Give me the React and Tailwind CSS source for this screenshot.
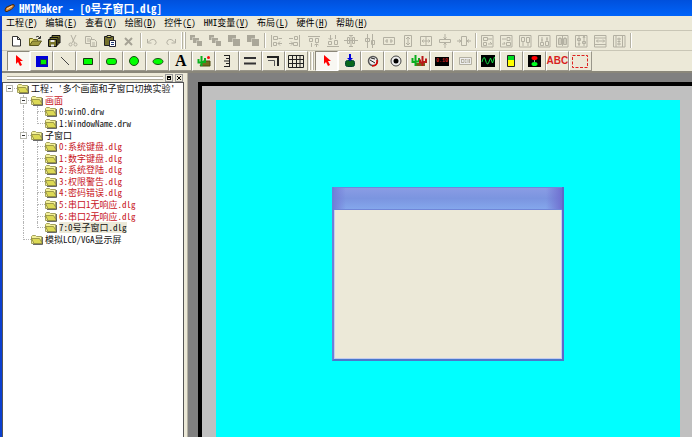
import { useState } from 'react'
import clsx from 'clsx'

const menus = [
  { text: '工程', hotkey: 'P' },
  { text: '编辑', hotkey: 'E' },
  { text: '查看', hotkey: 'V' },
  { text: '绘图', hotkey: 'D' },
  { text: '控件', hotkey: 'C' },
  { text: 'HMI变量', hotkey: 'V' },
  { text: '布局', hotkey: 'L' },
  { text: '硬件', hotkey: 'H' },
  { text: '帮助', hotkey: 'H' },
]

const tree = [
  { level: 0, text: "工程: '多个画面和子窗口切换实验'", open: true },
  { level: 1, text: '画面', open: true, red: true },
  { level: 2, text: '0:win0.drw' },
  { level: 2, text: '1:WindowName.drw', last: true },
  { level: 1, text: '子窗口', open: true },
  { level: 2, text: '0:系统键盘.dlg', red: true },
  { level: 2, text: '1:数字键盘.dlg', red: true },
  { level: 2, text: '2:系统登陆.dlg', red: true },
  { level: 2, text: '3:权限警告.dlg', red: true },
  { level: 2, text: '4:密码错误.dlg', red: true },
  { level: 2, text: '5:串口1无响应.dlg', red: true },
  { level: 2, text: '6:串口2无响应.dlg', red: true },
  { level: 2, text: '7:0号子窗口.dlg', last: true },
  { level: 1, text: '模拟LCD/VGA显示屏', last: true },
]

const Svg = ({ children, size = 14 }) => (
  <svg width={size} height={size} viewBox={`0 0 ${size} ${size}`} fill="none" stroke="#b3b0a2" className="shrink-0">
    {children}
  </svg>
)

/* ---- file and edit icons ---- */
const New = () => <Svg><path d="M3.5 2.5h5l3 3v6.5h-8zM8.5 2.5v3h3" fill="#fff" stroke="#333" /></Svg>
const Open = () => (
  <Svg>
    <path d="M1.5 11V4.5h3l1 1h4v2" fill="#e8e070" stroke="#6b661c" />
    <path d="M1.5 11.5l3-4.500h9l-3 4.500z" fill="#a09a3e" stroke="#5a5618" />
    <path d="M8 3q2-2 4 1M12.500 2v2.500h-2.500" stroke="#333" />
  </Svg>
)
const SaveAll = () => (
  <Svg>
    <path d="M5 1.500h8v7.500h-8z" fill="#77732a" stroke="#111" />
    <path d="M3 3.500h8v7.500H3z" fill="#77732a" stroke="#111" />
    <path d="M1.500 5.500h8v7h-8z" fill="#77732a" stroke="#111" />
    <path d="M3.500 6h4v2h-4zM4 10.500h3v2H4z" fill="#eee" stroke="none" />
  </Svg>
)
const Cut = () => <Svg><path d="M5 1l3.500 8M10 1L6 9" /><circle cx="4.500" cy="10.500" r="1.500" /><circle cx="9.500" cy="10.500" r="1.500" /></Svg>
const Copy = () => <Svg><path d="M1.500 2.500h5l1 1v6h-6zM3 5h3M3 7h3" /><path d="M6.500 5.500h4l2 2v5h-6zM8 9h3M8 11h3" fill="#ece9d8" /></Svg>
const Paste = () => (
  <Svg>
    <path d="M1.500 2.500h9v9h-9z" fill="#75712d" stroke="#222" />
    <path d="M4 1.500h4v2H4z" fill="#dcd877" stroke="#222" />
    <path d="M6.500 6.500h6v6h-6z" fill="#fff" stroke="#223" />
    <path d="M8 8.500h3M8 10.500h3" stroke="#223a7a" />
  </Svg>
)
const Delete = () => <Svg><path d="M3 4l7 7M10 4l-7 7" stroke="#a5a295" strokeWidth="2" /></Svg>
const Undo = () => <Svg><path d="M2.500 5v4h4M3 8.500q4-5 7.500-2 2 2.500-1 4.500" /></Svg>
const Redo = () => <Svg><path d="M11.500 5v4h-4M11 8.500q-4-5-7.500-2-2 2.500 1 4.500" /></Svg>

/* ---- stacking order icons ---- */
const Layers = ({ big }) => (
  <Svg>
    <path d={big ? 'M1 1h8v7H1zM6 5h7v7H6z' : 'M1 1h5v5H1zM4 4h6v5H4zM8 7h5v5H8z'} fill="#aaa799" stroke="none" />
    <path d={big ? 'M5.500 8V4.500H9' : 'M3.500 6V3.500H6M7.500 9V6.500H10'} stroke="#c9c6b8" />
  </Svg>
)
const Front = () => <Layers />
const Back = () => <Layers />
const Forward = () => <Layers big />
const Backward = () => <Layers big />

/* ---- alignment icons, all greyed out ---- */
const AlignLeft = () => <Svg><path d="M2.500 1v12M4.500 2.500h4v3h-4zM4.500 8.500h3v3h-3zM13 4.500H9.500M13 9.500H9l2-2M9 9.500l2 2" /></Svg>
const AlignRight = () => <Svg><path d="M11.500 1v12M6.500 2.500h3v3h-3zM5.500 8.500h4v3h-4zM1 4.500h4M1 9.500h4l-2-2M5 9.500l-2 2" /></Svg>
const AlignTop = () => <Svg><path d="M1 2.500h12M2.500 4.500h3v3h-3zM8.500 4.500h3v4h-3zM4.500 13V9M9.500 13v-3l-2 1M9.500 10l2 1" /></Svg>
const AlignBottom = () => <Svg><path d="M1 12.500h12M2.500 7.500h3v3h-3zM8.500 6.500h3v4h-3zM4.500 1v5l-2-2M4.500 6l2-2M9.500 1v4" /></Svg>
const CenterV = () => <Svg><path d="M0 6.500h14M3.500 3.500h2v6h-2zM8.500 3.500h2v6h-2zM7 1v12M5 12.500h4M5 1.500h4" /></Svg>
const CenterH = () => <Svg><path d="M4.500 0v14M9.500 0v14M2.500 4.500h4v3h-4zM8.500 6.500h3v4h-3z" /></Svg>
const SameW = () => <Svg><path d="M1.500 3.500h11v7h-11zM3 7h3M8 7h3M5 5v4M9 5v4" /></Svg>
const SameH = () => <Svg><path d="M3.500 1.500h7v11h-7zM7 3v8M5 5l2-2 2 2M5 9l2 2 2-2" /></Svg>
const SameBoth = () => <Svg><path d="M1.500 2.500h11v9h-11zM3 7h8M7 3v8M4.500 5.500L3 7l1.500 1.500M9.500 5.500L11 7l-1.500 1.500" /></Svg>
const SpaceV = () => <Svg><path d="M1.500 5.500h11v3h-11zM7 0v5M7 14V9M5.500 3.500L7 5l1.500-1.500M5.500 10.500L7 9l1.500 1.500" /></Svg>
const SpaceH = () => <Svg><path d="M4.500 2.500h5v9h-5zM0 7h4M14 7h-4M2 5.500L4 7 2 8.500M12 5.500L10 7l2 1.500" /></Svg>

const Framed = ({ d }) => <Svg><path d="M1.500 1.500h11.500v11.500H1.500z" /><path d={d} /></Svg>
const PageLeft = () => <Framed d="M3.500 3.500h4v3h-4zM3.500 8.500h3v3h-3zM8 5h4M8 10h4l-2-2" />
const PageRight = () => <Framed d="M8 3.500h3v3H8zM7.500 8.500h4v3h-4zM3 5h4M3 10h3l-1-2" />
const PageTop = () => <Framed d="M3.500 3.500h3v4h-3zM8.500 3.500h3v5h-3zM5 8v4M10 9v3" />
const PageBottom = () => <Framed d="M3.500 8.500h3v3h-3zM8.500 7.500h3v4h-3zM5 3v5M10 3v4M4 6h2M9 5h2" />
const PageCenterH = () => <Framed d="M3.500 4.500h3v6h-3zM8.500 4.500h3v6h-3zM7.500 2v10M5 3v8M10 3v8" />
const PageCenterV = () => <Framed d="M5 2v10M10 2v10M3.500 4.500h3v2h-3zM8.500 7.500h3v2h-3zM4 9l1 2 1-2M9 4l1-2 1 2" />
const PageW = () => <Framed d="M2 4h11M2 10.500h11M3.500 7h8M5 5.500L3.500 7 5 8.500M10 5.500L11.500 7 10 8.500" />
const PageH = () => <Framed d="M4 2v11M10.500 2v11M7 3.500v8M5 5h4M5 10h4M5.500 7.500h3" />

/* ---- drawing tool icons ---- */
const Pointer = () => <Svg size={16}><path d="M5 2v9l2-2 2 4 2-1-2-4h3z" fill="#f00" stroke="none" /></Svg>
const Window = () => <Svg size={16}><path d="M2 3h12v11H2z" fill="#0000d8" stroke="none" /><path d="M6.500 6.500h6v5h-6z" fill="#0e0" stroke="#135" /></Svg>
const Line = () => <Svg size={16}><path d="M4 4l8 8" stroke="#444" /></Svg>
const Rect = () => <Svg size={16}><path d="M3.500 5.500h9v6h-9z" fill="#0f0" stroke="#163a10" /></Svg>
const RoundRect = () => <Svg size={16}><rect x="3.500" y="5.500" width="10" height="6" rx="2.500" fill="#0f0" stroke="#1a4f14" /></Svg>
const Circle = () => <Svg size={16}><circle cx="8" cy="8" r="4.500" fill="#0f0" stroke="#1a4f14" /></Svg>
const Ellipse = () => <Svg size={16}><ellipse cx="8" cy="8.500" rx="5" ry="3" fill="#0f0" stroke="#1a4f14" /></Svg>
const Letter = () => <span className="font-['Liberation_Serif',serif] text-base leading-none font-bold">A</span>
const Picture = () => (
  <Svg size={16}>
    <path d="M7 8h7v5H4z" fill="#736b1c" stroke="#4c4a10" />
    <path d="M2.500 6v3.500H5M5.500 3v10M5 9h4V5" stroke="#0ab01e" strokeWidth="2" />
    <circle cx="12.500" cy="4.500" r="1.500" fill="#e11" stroke="none" />
  </Svg>
)
const Ruler = () => <Svg size={16}><path d="M10.500 2v12M5 2.500h6M7 5.500h4M5 8h6M7 10.500h4M5 13.500h6" stroke="#222" /></Svg>
const Parallel = () => <Svg size={16}><path d="M2 5h12M2 10.500h12" stroke="#333" strokeWidth="2" /></Svg>
const Pipe = () => <Svg size={16}><path d="M2 4h11v9" stroke="#222" strokeWidth="2" /><path d="M3 7.500h6.500V13" stroke="#555" /></Svg>
const Table = () => <Svg size={16}><path d="M.500 2.500h15v12H.500zM4.500 2v12M8.500 2v12M12 2v12M0 6.500h16M0 10.500h16" stroke="#222" /></Svg>
const Press = () => <Svg size={16}><rect x="3.500" y="7.500" width="9" height="6" rx="2" fill="#08681a" stroke="#043" /><path d="M8 1v4" stroke="#00d" strokeWidth="2" /><path d="M5 5h6L8 8z" fill="#00d" stroke="none" /></Svg>
const Gauge = () => <Svg size={16}><circle cx="8" cy="8" r="4.500" fill="#eee" stroke="#555" strokeWidth="1.500" /><path d="M5 7l5 3M6 5l4 1" stroke="#222" /><path d="M12 7q1 6-5 6" stroke="#d00" strokeWidth="1.500" /></Svg>
const Radio = () => <Svg size={16}><circle cx="8" cy="8" r="5" fill="#eee" stroke="#444" /><circle cx="8" cy="8" r="2.500" fill="#000" stroke="none" /></Svg>
const Plants = () => (
  <Svg size={16}>
    <path d="M4 10h10v3H4z" fill="#70621a" stroke="none" />
    <path d="M1.500 5v4h3M4.500 2v11M4 8.500h4V5" stroke="#0ab01e" strokeWidth="2" />
    <path d="M9 6.500v3h3M11.500 3v10M12 9h3V5.500" stroke="#b91818" strokeWidth="2" />
  </Svg>
)
const Led = () => (
  <span className="flex h-[9px] w-[14px] items-center justify-center bg-black font-['Liberation_Mono',monospace] text-[5px] leading-none font-bold text-[#d02020]">0.10</span>
)
const Edit = () => <Svg size={16}><path d="M2.500 4.500h12v7h-12z" fill="#eee" /><path d="M4.500 6v4M5 6.500h2v3H5M8 6.500h1.500M8 8h1.500M8 9.500h1.500M11 6v4M12.500 6v4" /></Svg>
const Wave = () => <Svg size={16}><path d="M1 2h14v12H1z" fill="#000" stroke="none" /><path d="M2 9q2-8 3.500-2t3 3l2-5 2 5 2-6" stroke="#1d4" /></Svg>
const Bar = () => <Svg size={16}><path d="M4.500 2.500h7v11h-7z" fill="#ff0" stroke="#222" /><path d="M5 3h6v4H5z" fill="#0d2" stroke="none" /></Svg>
const Lamp = () => <Svg size={16}><path d="M2 2h13v12H2z" fill="#000" stroke="none" /><ellipse cx="8.500" cy="5" rx="3" ry="2" fill="#f00" stroke="none" /><path d="M8.500 7v2" stroke="#999" /><ellipse cx="8.500" cy="11" rx="3" ry="2" fill="#0f2" stroke="none" /></Svg>
const Abc = () => <span className="font-['Liberation_Sans',sans-serif] text-[10px] leading-none font-bold text-[#d81f1f]">ABC</span>
const Frame = () => <Svg size={16}><path d="M.5 2.500h15v12H.5z" stroke="#d22" strokeDasharray="3 1.500" /></Svg>

const fileTools = { New, Open, SaveAll, Cut, Copy, Paste, Delete }
const historyTools = { Undo, Redo }
const orderTools = { Front, Back, Forward, Backward }
const alignTools = { AlignLeft, AlignRight, AlignTop, AlignBottom, CenterV, CenterH, SameW, SameH, SameBoth, SpaceV, SpaceH }
const pageTools = { PageLeft, PageRight, PageTop, PageBottom, PageCenterH, PageCenterV, PageW, PageH }
const drawTools = { Pointer, Window, Line, Rect, RoundRect, Circle, Ellipse, Letter, Picture, Ruler, Parallel, Pipe, Table }
const controlTools = { Pointer, Press, Gauge, Radio, Plants, Led, Edit, Wave, Bar, Lamp, Abc, Frame }

const FlatGroup = ({ tools, width }) => (
  <div className={clsx('flex shrink-0', width)}>
    {Object.entries(tools).map(([name, Icon]) => (
      <button key={name} aria-label={name} className="flex min-w-0 flex-1 items-center justify-center">
        <Icon />
      </button>
    ))}
  </div>
)

const RaisedGroup = ({ tools, width }) => {
  const [active, setActive] = useState('Pointer')
  return (
    <div className={clsx('flex shrink-0', width)}>
      {Object.entries(tools).map(([name, Icon]) => (
        <button
          key={name}
          aria-label={name}
          onClick={() => setActive(name)}
          className={clsx(
            'flex min-w-0 flex-1 items-center justify-center border',
            active == name ? 'border-t-[#8b887a] border-l-[#8b887a] border-r-white border-b-white bg-[#f8f7f2]' : 'border-t-white border-l-white border-r-[#99968a] border-b-[#99968a]'
          )}
        >
          <Icon />
        </button>
      ))}
    </div>
  )
}

const Separator = () => (
  <div className="flex w-[5px] shrink-0 justify-center py-[2px]">
    <div className="w-[2px] border-l border-[#b5b2a3] bg-white"></div>
  </div>
)

const Grip = () => (
  <div className="flex w-[7px] shrink-0 justify-center gap-[1px] py-[1px]">
    <div className="w-[2px] border-r border-[#b5b2a3] bg-white"></div>
    <div className="w-[2px] border-r border-[#b5b2a3] bg-white"></div>
  </div>
)

const Folder = () => (
  <svg width="14" height="11" viewBox="0 0 14 11" className="shrink-0">
    <path d="M.500 9.500V2.500l1-1h3l1 1h5v7z" fill="#f3f09a" stroke="#a5a25c" />
    <path d="M.500 4.500h8l3 5H3z" fill="#dcd955" stroke="#8a873c" strokeWidth=".8" />
    <path d="M11.500 3v7.500H2" fill="none" stroke="#444" strokeWidth=".8" />
  </svg>
)

// dotted connector: line down the middle with a branch to the right
const Branch = ({ last, top = true, branch = true, children }) => (
  <span className="relative flex w-[14px] shrink-0 self-stretch pl-[6px]">
    <span className="flex flex-1 flex-col">
      <span className={clsx('flex-1 border-dotted border-[#b5b5b5]', top && 'border-l', branch && 'border-b')}></span>
      <span className={clsx('flex-1 border-dotted border-[#b5b5b5]', !last && 'border-l')}></span>
    </span>
    {children}
  </span>
)

const Expander = () => (
  <button aria-label="Collapse" className="absolute inset-y-0 left-[3px] my-auto flex size-[7px] items-center justify-center border border-[#b9b9b0] bg-white">
    <span className="h-px w-[3px] bg-[#333]"></span>
  </button>
)

const TreeRow = ({ item, selected, onSelect }) => {
  const { level, text, open, red, last } = item
  return (
    <li className="flex items-center">
      {level > 0 && <span className="w-[14px] shrink-0"></span>}
      {level == 2 && <Branch branch={false} />}
      <Branch last={last || level == 0} top={level > 0}>{open && <Expander />}</Branch>
      <Folder />
      <button
        onClick={onSelect}
        className={clsx('leading-[11px] whitespace-pre', red ? 'text-[#c8141c]' : 'text-[#111]', selected && 'bg-[#ece9d8]')}
      >
        {text}
      </button>
    </li>
  )
}

const ProjectPanel = () => {
  const [selected, setSelected] = useState(12)
  return (
    <aside className="flex w-[186px] shrink-0 flex-col border-r border-[#b5b2a3] bg-[#ece9d8] pr-[3px]">
      <div className="flex h-[9px] items-center gap-[2px] pr-px pl-[5px]">
        <div className="h-[4px] flex-1 border-y border-[#aca899] bg-white"></div>
        <button aria-label="Dock" className="flex size-[8px] items-center justify-center border border-[#999]">
          <span className="size-[4px] border border-t-2 border-black"></span>
        </button>
        <button aria-label="Close" className="flex size-[8px] items-center justify-center border border-[#999]">
          <svg width="4" height="4" viewBox="0 0 4 4" stroke="#000"><path d="M0 0l4 4M4 0L0 4" /></svg>
        </button>
      </div>
      <div className="flex-1 border border-b-0 border-[#555] bg-white">
        <ul className="grid h-[162px] auto-rows-fr">
          {tree.map((item, i) => (
            <TreeRow key={i} item={item} selected={selected == i} onSelect={() => setSelected(i)} />
          ))}
        </ul>
      </div>
    </aside>
  )
}

const Canvas = () => (
  <main className="flex min-w-0 flex-1 bg-[#808080] pt-[9px] pl-[10px]">
    <div className="flex flex-1 border-t-4 border-l-4 border-black bg-[#c0c0c0] pt-[14px] pr-[12px] pl-[14px]">
      <div className="relative flex-1 bg-[#00ffff]">
        <section className="absolute top-[87px] left-[116px] flex h-[174px] w-[232px] flex-col border-2 border-t-0 border-[#6c80d8] border-r-[#5f68c8] border-b-[#4a78cc] bg-[#ece9d8]">
          <header className="flex h-[23px] justify-between border-t border-b border-t-[#6f88dc] border-b-[#7086d8] bg-linear-to-b from-[#8a9ce4] via-[#7b95e0] to-[#84a7ec]">
            <div className="w-[12px] bg-linear-to-r from-[#7480d8] to-transparent"></div>
            <div className="w-[16px] bg-linear-to-l from-[#7070d0] to-transparent"></div>
          </header>
          <div className="flex-1 border border-t-0 border-[#c3cbee]"></div>
        </section>
      </div>
    </div>
  </main>
)

const App = () => {
  return (
    <div className="flex min-h-screen flex-col overflow-hidden bg-[#ece9d8] font-['Noto_Sans_Mono_CJK_SC','Noto_Sans_CJK_SC',monospace] text-[9px] text-black">
      <header className="flex h-[16px] items-center gap-[4px] bg-linear-to-b from-[#0050dc] to-[#0064fa] pl-[4px] text-white">
        <svg width="11" height="10" viewBox="0 0 11 10">
          <path d="M1 7q0-3 4-4l4-1.500q2 0 1 2Q8 7 3 8.500 1 9 1 7z" fill="#d98a3c" stroke="#3a2410" />
          <path d="M3 6l5-3" stroke="#ffe0a0" />
        </svg>
        <h1 className="text-[11px] leading-[12px] font-bold whitespace-pre">HMIMaker - [0号子窗口.dlg]</h1>
      </header>
      <div className="flex flex-1 flex-col border-l-2 border-[#0a3fd0]">
        <nav className="flex h-[14px] items-center gap-[8px] pl-[4px]">
          {menus.map((m) => (
            <button key={m.text} className="leading-[12px] whitespace-nowrap">
              {m.text}(<u>{m.hotkey}</u>)
            </button>
          ))}
        </nav>
        <div className="flex h-[20px] border-t border-[#c9c6b6] pl-[5px]">
          <FlatGroup tools={fileTools} width="w-[131px]" />
          <Separator />
          <FlatGroup tools={historyTools} width="w-[37px]" />
          <Grip />
          <FlatGroup tools={orderTools} width="w-[75px]" />
          <Separator />
          <FlatGroup tools={alignTools} width="w-[206px]" />
          <Separator />
          <FlatGroup tools={pageTools} width="w-[150px]" />
          <Separator />
        </div>
        <div className="flex h-[23px] border-t border-b-2 border-t-[#c9c6b6] border-b-[#8a877a] pl-[5px]">
          <RaisedGroup tools={drawTools} width="w-[301px]" />
          <Grip />
          <RaisedGroup tools={controlTools} width="w-[277px]" />
        </div>
        <div className="flex flex-1">
          <ProjectPanel />
          <Canvas />
        </div>
      </div>
    </div>
  )
}

export default App
